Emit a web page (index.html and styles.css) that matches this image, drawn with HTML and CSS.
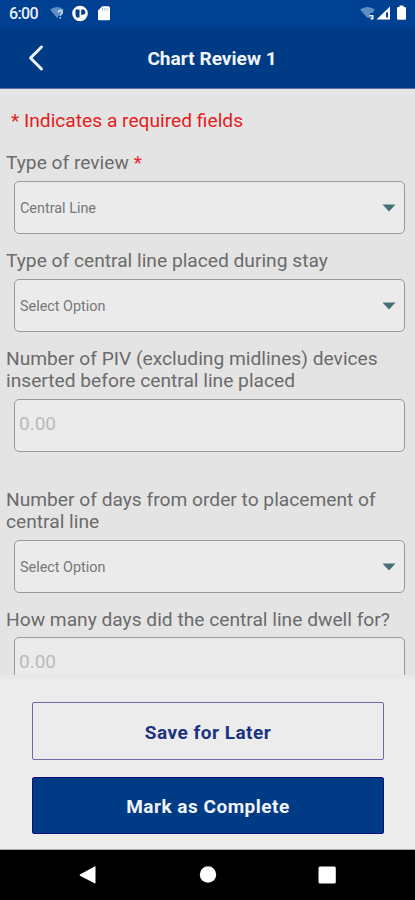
FILE: index.html
```html
<!DOCTYPE html>
<html lang="en">
<head>
<meta charset="utf-8">
<title>Chart Review 1</title>
<link rel="stylesheet" href="styles.css">
</head>
<body>
<div class="phone">
  <div class="status">
    <span class="time">6:00</span>
    <svg class="status-left" width="64" height="18" viewBox="0 0 64 18">
      <path d="M1 5.5Q8 .5 15 5.5L8 14Z" fill="#5e8fc3"/>
      <path d="M9.2 8.4Q9.400 6.500 11.300 6.500T13.300 8.300Q13.300 9.500 12 10.200Q11.400 10.700 11.400 11.800M11.400 13.100V14.600" fill="none" stroke="#dce7f5" stroke-width="1.5"/>
      <circle cx="31" cy="9.500" r="7.800" fill="#fff"/>
      <path d="M26.500 5.500h4v8h-2.500Q26.500 12.500 26.500 10.500Z" fill="#003d8c"/>
      <path d="M32.200 5.500h1.500a2.600 2.600 0 0 1 0 5.200h-1.500z" fill="#003d8c"/>
      <path d="M53.300 2.200h6.200q1.500 0 1.500 1.500V15q0 1.300-1.300 1.300h-9.400Q49 16.300 49 15V6.500z" fill="#fff"/>
      <path d="M53.500 4v2.500M55.800 4v2.500M58.100 4v2.500" stroke="#9bb7d8" stroke-width="1"/>
    </svg>
    <svg class="status-right" width="50" height="18" viewBox="0 0 50 18">
      <path d="M1 5.500Q8.500 .5 16 5.500L13.500 9H11v4.500L8.500 14Z" fill="#5e8fc3"/>
      <path d="M10.500 11h4v4.500h-3v-2h1.500v-1h-2.500z" fill="#eef4fb"/>
      <path d="M17.500 15.500 31 2.500V15.500Z" fill="#fff"/>
      <path d="M27 8.500h2v5h-2z" fill="#003d8c"/>
      <path d="M40.500 1.500h4V3h1.300q1.200 0 1.200 1.200V14.500q0 1.200-1.200 1.200h-6.600Q38 15.700 38 14.500V4.200Q38 3 39.200 3h1.300z" fill="#fff"/>
    </svg>
  </div>
  <header class="appbar">
    <svg class="back" width="18" height="28" viewBox="0 0 18 28"><path d="M15.500 3 4.500 14 15.500 25" fill="none" stroke="#f2f5fa" stroke-width="3" stroke-linecap="round" stroke-linejoin="round"/></svg>
    <h1 class="title">Chart Review 1</h1>
  </header>
  <main class="form">
    <p class="notice">* Indicates a required fields</p>
    <div class="field">
      <div class="label">Type of review <span class="req">*</span></div>
      <div class="box"><span class="value">Central Line</span><svg class="caret" width="14" height="8" viewBox="0 0 14 8"><path d="M.5.5h13L7 7.500z"/></svg></div>
    </div>
    <div class="field">
      <div class="label">Type of central line placed during stay</div>
      <div class="box"><span class="value">Select Option</span><svg class="caret" width="14" height="8" viewBox="0 0 14 8"><path d="M.5.5h13L7 7.500z"/></svg></div>
    </div>
    <div class="field numeric">
      <div class="label">Number of PIV (excluding midlines) devices<br>inserted before central line placed</div>
      <div class="box"><span class="placeholder">0.00</span></div>
    </div>
    <div class="field">
      <div class="label">Number of days from order to placement of<br>central line</div>
      <div class="box"><span class="value">Select Option</span><svg class="caret" width="14" height="8" viewBox="0 0 14 8"><path d="M.5.5h13L7 7.500z"/></svg></div>
    </div>
    <div class="field last">
      <div class="label">How many days did the central line dwell for?</div>
      <div class="box"><span class="placeholder">0.00</span></div>
    </div>
  </main>
  <footer class="actions">
    <div class="btn outline">Save for Later</div>
    <div class="btn solid">Mark as Complete</div>
  </footer>
  <nav class="nav">
    <svg width="415" height="49" viewBox="0 0 415 49">
      <path d="M80 24.500 94.500 16.500Q95.500 16 95.500 17V32.500Q95.500 33.800 94.500 33.200L80 25.700Q79 25.100 80 24.500Z"/>
      <circle cx="208" cy="24.500" r="8.200"/>
      <rect x="318.500" y="16.500" width="17.300" height="17" rx="1.500"/>
    </svg>
  </nav>
</div>
</body>
</html>
```
FILE: styles.css
```css
* { box-sizing: border-box; }
body { margin: 0; font-family: Roboto, "Liberation Sans", sans-serif; background: #ececec; }
.phone { width: 415px; height: 900px; display: flex; flex-direction: column; overflow: hidden; }
.status { height: 28px; flex: none; background: #004093; display: flex; align-items: center; padding: 0 6px 0 9px; color: #e9f0f9; }
.time { font-size: 16px; font-weight: 500; width: 40px; letter-spacing: -0.6px; line-height: 28px; }
.status-left { margin-top: -2px; }
.status-right { margin: -2px 0 0 auto; }
.appbar { height: 61px; flex: none; background: #003c86; border-bottom: 1px solid #5b70a5; display: grid; grid-template-columns: 60px 1fr 60px; align-items: center; }
.back { margin-left: 26px; }
.title { margin: 2px 0 0 9px; font-size: 19.1px; font-weight: 700; color: #f1f4f9; text-align: center; line-height: 22px; white-space: nowrap; }
.form { height: 586px; flex: none; overflow: hidden; background: #e4e4e4; padding: 21px 10px 0 6px; }
.notice { margin: 0 0 20px 5px; font-size: 19.2px; line-height: 22px; color: #e51c20; white-space: nowrap; }
.field { margin-bottom: 16px; }
.field.numeric { margin-bottom: 37px; }
.label { font-size: 19.2px; line-height: 22px; color: #6b6b6b; white-space: nowrap; }
.req { color: #ee2226; }
.box { margin: 7px 0 0 8px; height: 53px; border: 1px solid #999; border-radius: 5px; background: #ebebeb; display: flex; align-items: center; justify-content: space-between; padding: 0 8px 0 5px; }
.last .box { margin-top: 6px; }
.value { font-size: 14.4px; color: #777; line-height: 20px; padding-top: 2px; }
.placeholder { font-size: 19px; color: #bababa; line-height: 22px; margin: -4px 0 0 -1px; }
.caret { fill: #467078; }
.actions { flex: none; height: 175px; background: #ececec; border-top: 4px solid #e8e8e8; border-bottom: 1px solid #aaa; padding: 23px 31px 0 32px; display: flex; flex-direction: column; gap: 17px; }
.btn { height: 58px; border: 1px solid #6b6ba8; border-radius: 2px; display: flex; align-items: center; justify-content: center; font-size: 19px; font-weight: 700; letter-spacing: 0.5px; color: #1b3282; padding-top: 2px; }
.btn.solid { height: 57px; background: #003c86; border-color: #101080; color: #f2f4fa; }
.nav { flex: 1; background: #000; }
.nav svg { display: block; fill: #fff; }
```
